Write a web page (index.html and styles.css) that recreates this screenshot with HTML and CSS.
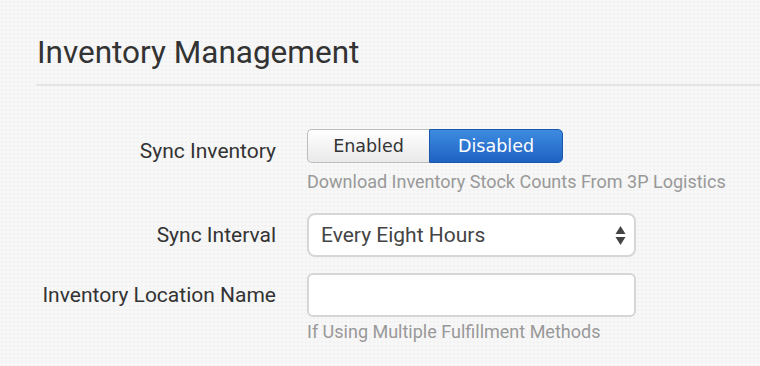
FILE: index.html
```html
<!DOCTYPE html>
<html lang="en">
<head>
  <meta charset="UTF-8" />
  <title>Inventory Management</title>
  <link rel="stylesheet" href="styles.css">
</head>
<body>
  <section class="panel">
    <h1 class="panel-title">Inventory Management</h1>
    <hr class="panel-rule">

    <form class="settings">
      <div class="row row-sync">
        <label class="row-label">Sync Inventory</label>
        <div class="row-field">
          <div class="toggle">
            <button type="button" class="toggle-btn">Enabled</button>
            <button type="button" class="toggle-btn active">Disabled</button>
          </div>
          <p class="help help-sync">Download Inventory Stock Counts From 3P Logistics</p>
        </div>
      </div>

      <div class="row row-interval">
        <label class="row-label">Sync Interval</label>
        <div class="row-field">
          <div class="select-wrap">
            <select class="select">
              <option>Every Eight Hours</option>
              <option>Every Hour</option>
              <option>Every Day</option>
            </select>
            <svg class="select-arrows" width="11" height="19" viewBox="0 0 11 19">
              <path d="M5.5 0 L10.5 8 L0.5 8 Z" fill="#444"/>
              <path d="M0.5 11 L10.5 11 L5.5 19 Z" fill="#444"/>
            </svg>
          </div>
        </div>
      </div>

      <div class="row row-location">
        <label class="row-label">Inventory Location Name</label>
        <div class="row-field">
          <input type="text" class="text-input">
          <p class="help help-location">If Using Multiple Fulfillment Methods</p>
        </div>
      </div>
    </form>
  </section>
</body>
</html>
```

FILE: styles.css
```css
* {
  margin: 0;
  padding: 0;
  box-sizing: border-box;
}

body {
  background-color: #f7f7f7;
  background-image: radial-gradient(rgba(0, 0, 0, 0.025) 1px, transparent 1px);
  background-size: 4px 4px;
  font-family: Roboto, "Noto Sans", sans-serif;
  color: #333;
}

.panel {
  padding-left: 36px;
}

.panel-title {
  margin-top: 35px;
  padding-left: 1px;
  font-size: 31.5px;
  line-height: 36px;
  font-weight: 400;
  color: #333;
}

.panel-rule {
  margin-top: 13px;
  border: none;
  border-top: 2px solid #e4e4e4;
}

.settings {
  margin-top: 43px;
}

.row {
  display: flex;
  gap: 31px;
  align-items: flex-start;
}

.row-interval {
  margin-top: 21px;
}

.row-location {
  margin-top: 16px;
}

.row-label {
  width: 240px;
  text-align: right;
  font-size: 21px;
  line-height: 44px;
  color: #333;
  white-space: nowrap;
}

.row-field {
  width: 329px;
}

.toggle {
  display: flex;
  height: 34px;
}

.toggle-btn {
  font-family: "DejaVu Sans", Verdana, sans-serif;
  font-size: 17.5px;
  border: 1px solid #bdbdbd;
  background: linear-gradient(#ffffff, #e9e9e9);
  color: #333;
  cursor: pointer;
}

.toggle-btn:first-child {
  width: 122px;
  border-radius: 5px 0 0 5px;
  border-right: none;
}

.toggle-btn.active {
  width: 134px;
  border-color: #1b57a8;
  border-radius: 0 5px 5px 0;
  background: linear-gradient(#3d8be0, #1f62c2);
  color: #fff;
}

.help {
  font-size: 18px;
  line-height: 20px;
  color: #999;
  white-space: nowrap;
}

.help-sync {
  margin-top: 9px;
}

.help-location {
  margin-top: 5px;
}

.select-wrap {
  position: relative;
}

.select {
  appearance: none;
  -webkit-appearance: none;
  width: 100%;
  height: 44px;
  padding: 0 36px 0 12px;
  border: 2px solid #d6d6d6;
  border-radius: 8px;
  background: #fff;
  font-family: Roboto, "Noto Sans", sans-serif;
  font-size: 21px;
  color: #444;
}

.select-arrows {
  position: absolute;
  right: 10px;
  top: 13px;
  pointer-events: none;
}

.text-input {
  display: block;
  width: 100%;
  height: 44px;
  border: 2px solid #d6d6d6;
  border-radius: 6px;
  background: #fff;
  padding: 0 13px;
  font-size: 20px;
}
```
